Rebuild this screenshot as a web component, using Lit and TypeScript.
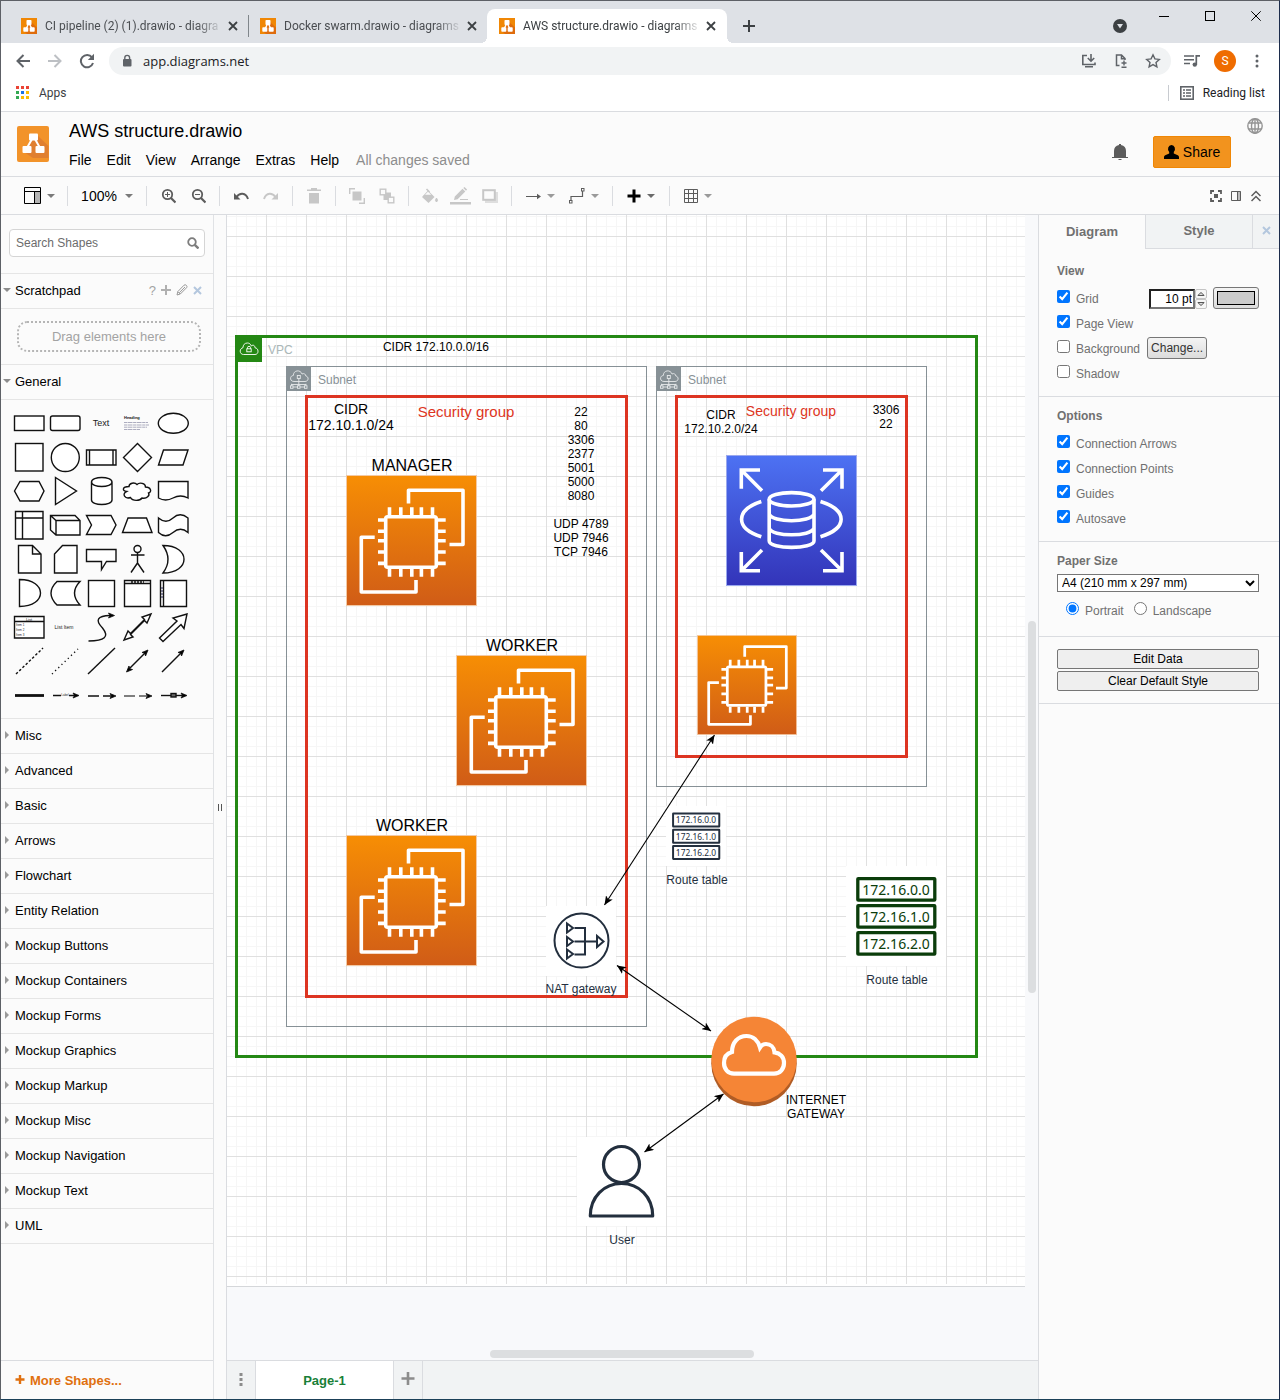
import { LitElement, html, svg, css, type SVGTemplateResult, type TemplateResult } from "lit";
import { customElement } from "lit/decorators.js";

/* ---------- helpers ---------- */

const icon = (w: number, h: number, body: SVGTemplateResult): TemplateResult =>
  html`<svg class="icon" width=${w} height=${h} viewBox="0 0 ${w} ${h}" aria-hidden="true">${body}</svg>`;

const base = css`
  * {
    box-sizing: border-box;
  }
  button,
  input,
  select {
    font-family: inherit;
    margin: 0;
  }
  .plain {
    border: 0;
    background: none;
    padding: 0;
    color: inherit;
    display: flex;
    align-items: center;
    justify-content: center;
  }
  .icon {
    display: block;
    flex: none;
  }
`;

const favicon = icon(16, 16, svg`
  <rect width="16" height="16" fill="#f08705"/>
  <path d="M9.500 3.500L16 9.500V16H6L3 13z" fill="#df6c0c"/>
  <path d="M7.500 6L5 11M8.500 6L11 11" stroke="#fff" stroke-width="1.400"/>
  <rect x="5.500" y="2" width="5" height="5" rx=".8" fill="#fff"/>
  <rect x="2.300" y="9.200" width="5" height="4.600" rx=".8" fill="#fff"/>
  <rect x="8.700" y="9.200" width="5" height="4.600" rx=".8" fill="#fff"/>`);

const caret = (fill = "#9a9a9a") => icon(8, 4, svg`<path d="M0 0h8L4 4z" fill=${fill}/>`);

const blueCross = icon(9, 9, svg`<path d="M1 1l7 7M8 1L1 8" stroke="#b4c7de" stroke-width="2"/>`);

/* ---------- browser frame ---------- */

@customElement("browser-bar")
class BrowserBar extends LitElement {
  static styles = [
    base,
    css`
      :host {
        display: block;
        font-family: Roboto, "Noto Sans", sans-serif;
        font-size: 12px;
        color: #3c4043;
        background: #fff;
      }
      .strip {
        display: flex;
        height: 42px;
        padding: 8px 0 0 8px;
        background: #dee1e6;
      }
      .tab {
        display: flex;
        align-items: center;
        flex: 0 1 239px;
        min-width: 0;
        height: 34px;
        padding: 0 7px 0 12px;
        color: #4a4d51;
      }
      .tab.split {
        border-left: 1px solid #80868b;
        border-image: linear-gradient(transparent 20%, #80868b 20%, #80868b 80%, transparent 80%) 1;
        padding-left: 11px;
      }
      .tab.active {
        flex-basis: 240px;
        position: relative;
        padding-right: 8px;
        background: #fff;
        border-radius: 8px 8px 0 0;
        color: #3c4043;
      }
      .tab.active::before,
      .tab.active::after {
        content: "";
        position: absolute;
        bottom: 0;
        width: 6px;
        height: 6px;
      }
      .tab.active::before {
        left: -6px;
        background: radial-gradient(circle at 0 0, transparent 6px, #fff 6px);
      }
      .tab.active::after {
        right: -6px;
        background: radial-gradient(circle at 100% 0, transparent 6px, #fff 6px);
      }
      .name {
        flex: 1;
        min-width: 0;
        margin: 0 2px 0 8px;
        overflow: hidden;
        white-space: nowrap;
        mask-image: linear-gradient(to right, #000 85%, transparent);
      }
      .close {
        width: 16px;
        height: 16px;
      }
      .new {
        width: 32px;
        margin-left: 6px;
      }
      .end {
        display: flex;
        margin-left: auto;
      }
      .search-tabs {
        width: 42px;
        height: 34px;
      }
      .win {
        width: 46px;
        height: 29px;
        margin-top: -8px;
      }
      .nav {
        display: flex;
        align-items: center;
        height: 37px;
        padding: 0 6px 1px;
        color: #5f6368;
      }
      .tool {
        width: 32px;
        height: 28px;
      }
      .address {
        display: flex;
        align-items: center;
        flex: 1;
        height: 28px;
        margin: 0 5px 0 6px;
        padding: 0 2px 0 12px;
        border-radius: 14px;
        background: #f1f3f4;
      }
      .url {
        flex: 1;
        min-width: 0;
        height: 28px;
        padding: 0 0 0 10px;
        border: 0;
        background: none;
        font-family: "Open Sans", "Noto Sans", sans-serif;
        font-size: 13px;
        color: #202124;
      }
      .avatar {
        width: 22px;
        height: 22px;
        margin: 0 5px 0 6px;
        border-radius: 50%;
        background: #ef6c00;
        color: #fff;
        font: 12px Roboto, sans-serif;
      }
      .marks {
        display: flex;
        align-items: center;
        height: 32px;
        padding: 0 14px 6px 15px;
        border-bottom: 1px solid #dadce0;
      }
      .mark {
        gap: 10px;
        height: 24px;
        font-size: 12px;
      }
      .reading {
        gap: 9px;
        margin-left: auto;
        padding-left: 11px;
        color: #202124;
        border-left: 1px solid #c8cbd0;
        height: 16px;
        font-size: 12px;
      }
    `,
  ];

  private tab(name: string, cls: string) {
    return html`<div class="tab ${cls}">
      ${favicon}<span class="name">${name}</span>
      <button class="plain close" aria-label="Close tab">
        ${icon(10, 10, svg`<path d="M1 1l8 8M9 1L1 9" stroke="#3c4043" stroke-width="1.800"/>`)}
      </button>
    </div>`;
  }

  render() {
    const dots = ["#ea4335", "#ea4335", "#ea4335", "#34a853", "#1a73e8", "#fbbc04", "#34a853", "#fbbc04", "#fbbc04"];
    return html`
      <div class="strip">
        ${this.tab("CI pipeline (2) (1).drawio - diagra", "")}
        ${this.tab("Docker swarm.drawio - diagrams", "split")}
        ${this.tab("AWS structure.drawio - diagrams", "active")}
        <button class="plain new" aria-label="New tab">
          ${icon(12, 12, svg`<path d="M6 0v12M0 6h12" stroke="#3c4043" stroke-width="2"/>`)}
        </button>
        <div class="end">
          <button class="plain search-tabs" aria-label="Search tabs">
            ${icon(14, 14, svg`<circle cx="7" cy="7" r="7" fill="#3c4043"/><path d="M4 5h6L7 9.500z" fill="#dee1e6"/>`)}
          </button>
          <button class="plain win" aria-label="Minimise">
            ${icon(10, 10, svg`<path d="M0 5.500h10" stroke="#000"/>`)}
          </button>
          <button class="plain win" aria-label="Maximise">
            ${icon(10, 10, svg`<rect x=".5" y=".5" width="9" height="9" fill="none" stroke="#000"/>`)}
          </button>
          <button class="plain win" aria-label="Close window">
            ${icon(10, 10, svg`<path d="M.3.300l9.400 9.400M9.700.3L.3 9.700" stroke="#000"/>`)}
          </button>
        </div>
      </div>
      <div class="nav">
        <button class="plain tool" aria-label="Back">
          ${icon(14, 14, svg`<path d="M14 7H1.500M7.500 1l-6 6 6 6" fill="none" stroke="#5f6368" stroke-width="2"/>`)}
        </button>
        <button class="plain tool" aria-label="Forward">
          ${icon(14, 14, svg`<path d="M0 7h12.500M6.500 1l6 6-6 6" fill="none" stroke="#bdc0c4" stroke-width="2"/>`)}
        </button>
        <button class="plain tool" aria-label="Reload">
          ${icon(16, 16, svg`<path d="M13 4.300A6.200 6.200 0 1 0 14 10" fill="none" stroke="#5f6368" stroke-width="2"/><path d="M15 .8V7H8.800z" fill="#5f6368"/>`)}
        </button>
        <div class="address">
          ${icon(12, 14, svg`<rect x="2" y="5" width="8.500" height="7.500" rx="1" fill="#5f6368"/><path d="M3.800 6V3.800a2.400 2.400 0 0 1 4.800 0V6" fill="none" stroke="#5f6368" stroke-width="1.400"/>`)}
          <input class="url" aria-label="Address" value="app.diagrams.net" />
          <button class="plain tool" aria-label="Install app">
            ${icon(16, 14, svg`<path d="M6 1.500H1.800v9H14V8.500" fill="none" stroke="#5f6368" stroke-width="1.600"/><path d="M4 12h8v1.500H4z" fill="#5f6368"/><path d="M10 0v6.500M6.800 4L10 7.200 13.200 4" fill="none" stroke="#5f6368" stroke-width="1.600"/>`)}
          </button>
          <button class="plain tool" aria-label="Save page">
            ${icon(14, 14, svg`<path d="M5.500 11.500H2.500V1h5l3.500 3.500V6M7.500 1v3.800H11" fill="none" stroke="#5f6368" stroke-width="1.500"/><path d="M10 6.500v5M7.500 9h5M7.500 13.300h5" fill="none" stroke="#5f6368" stroke-width="1.400"/>`)}
          </button>
          <button class="plain tool" aria-label="Bookmark">
            ${icon(16, 16, svg`<path d="M8 1.800l1.900 4.100 4.400.5-3.300 3 .9 4.400L8 11.600l-3.900 2.200.9-4.400-3.300-3 4.400-.5z" fill="none" stroke="#5f6368" stroke-width="1.400"/>`)}
          </button>
        </div>
        <button class="plain tool" aria-label="Media">
          ${icon(16, 12, svg`<path d="M0 1h10M0 4.800h10M0 8.500h6" stroke="#5f6368" stroke-width="1.600"/><path d="M12.300 10V.8H16" fill="none" stroke="#5f6368" stroke-width="1.700"/><circle cx="10.800" cy="9.600" r="2.200" fill="#5f6368"/>`)}
        </button>
        <button class="plain avatar" aria-label="Profile">S</button>
        <button class="plain tool" aria-label="Browser menu">
          ${icon(4, 14, svg`<circle cx="2" cy="2" r="1.500" fill="#5f6368"/><circle cx="2" cy="7" r="1.500" fill="#5f6368"/><circle cx="2" cy="12" r="1.500" fill="#5f6368"/>`)}
        </button>
      </div>
      <div class="marks">
        <button class="plain mark">
          ${icon(13, 13, svg`${dots.map((c, i) => svg`<rect x=${(i % 3) * 5} y=${Math.floor(i / 3) * 5} width="3" height="3" fill=${c}/>`)}`)}
          Apps
        </button>
        <button class="plain reading">
          ${icon(14, 14, svg`<rect x=".8" y=".8" width="12.400" height="12.400" fill="none" stroke="#5f6368" stroke-width="1.600"/><path d="M3 4h2M6 4h5M3 7h2M6 7h5M3 10h2M6 10h5" stroke="#5f6368" stroke-width="1.500"/>`)}
          Reading list
        </button>
      </div>
    `;
  }
}

/* ---------- application header and tool bar ---------- */

@customElement("editor-header")
class EditorHeader extends LitElement {
  static styles = [
    base,
    css`
      :host {
        display: block;
        background: #fbfbfb;
        font-size: 14px;
        color: #000;
      }
      .top {
        display: flex;
        height: 65px;
        padding: 0 16px;
        border-bottom: 1px solid #dadce0;
      }
      .logo {
        margin-top: 14px;
      }
      .titles {
        flex: 1;
        padding: 8px 0 0 20px;
      }
      .title {
        margin: 0;
        font-size: 18px;
        line-height: 22px;
        font-weight: normal;
      }
      .menus {
        display: flex;
        gap: 15px;
        margin-top: 8px;
        line-height: 20px;
      }
      .menus .plain {
        font-size: 14px;
      }
      .status {
        color: #8d8d8d;
        padding-left: 2px;
      }
      .bell {
        width: 32px;
        height: 32px;
        margin: 24px 17px 0 0;
      }
      .share {
        gap: 4px;
        width: 78px;
        height: 32px;
        margin: 24px 16px 0 0;
        background: #f2931e;
        border: 1px solid #f08705;
        border-radius: 2px;
        font-size: 14px;
      }
      .globe {
        width: 16px;
        height: 16px;
        margin-top: 6px;
      }
      .tools {
        display: flex;
        align-items: center;
        height: 38px;
        padding: 0 13px 0 16px;
        border-bottom: 1px solid #dadce0;
      }
      .tool {
        width: 30px;
        height: 30px;
        font-size: 14px;
      }
      .drop {
        width: 44px;
        gap: 6px;
      }
      .zoom {
        width: 66px;
        gap: 8px;
      }
      .sep {
        width: 1px;
        height: 20px;
        margin: 0 6px;
        background: #dadce0;
      }
      .view {
        width: 20px;
      }
      .first {
        margin-left: auto;
      }
    `,
  ];

  render() {
    const g = "#c7c7c7";
    const d = "#5c5c5c";
    const sep = html`<span class="sep"></span>`;
    const t = (label: string, body: TemplateResult) =>
      html`<button class="plain tool" aria-label=${label}>${body}</button>`;
    const drop = (label: string, body: TemplateResult, c?: string) =>
      html`<button class="plain tool drop" aria-label=${label}>${body}${caret(c)}</button>`;
    return html`
      <div class="top">
        <div class="logo">
          ${icon(32, 36, svg`
            <rect width="32" height="36" rx="2" fill="#f2932a"/>
            <path d="M19 8l12.500 12V32H16L7 26z" fill="#e07f30"/>
            <path d="M15 13l-4.500 8M18 13l4.500 8" stroke="#fff" stroke-width="2"/>
            <rect x="12" y="7.500" width="9" height="7" rx="1" fill="#fff"/>
            <rect x="5.500" y="20" width="9" height="7" rx="1" fill="#fff"/>
            <rect x="18.500" y="20" width="9" height="7" rx="1" fill="#fff"/>`)}
        </div>
        <div class="titles">
          <h1 class="title">AWS structure.drawio</h1>
          <nav class="menus">
            ${["File", "Edit", "View", "Arrange", "Extras", "Help"].map((m) => html`<button class="plain">${m}</button>`)}
            <span class="status">All changes saved</span>
          </nav>
        </div>
        <button class="plain bell" aria-label="Notifications">
          ${icon(16, 18, svg`<path d="M2 14V8a6 6 0 0 1 5-5.900V1h2v1.100A6 6 0 0 1 14 8v6z" fill="${d}"/><path d="M0 14.500h16M6.500 16.500h3" stroke="${d}"/>`)}
        </button>
        <button class="plain share">
          ${icon(15, 15, svg`<path d="M7.500 0a3.500 4 0 0 1 2.300 7v1.500l4 1.800q1.200.6 1.200 1.700v2H0v-2q0-1.100 1.200-1.700l4-1.800V7A3.500 4 0 0 1 7.500 0z"/>`)}
          Share
        </button>
        <button class="plain globe" aria-label="Language">
          ${icon(16, 16, svg`<g fill="none" stroke="#949494" stroke-width="1.400"><circle cx="8" cy="8" r="7.200"/><ellipse cx="8" cy="8" rx="3.500" ry="7.200"/><path d="M8 1v14M2 5h12M2 11h12"/></g>`)}
        </button>
      </div>
      <div class="tools">
        ${drop("View", icon(17, 17, svg`<rect x="11" y="5" width="5" height="11" fill="#b3b3b3"/><path d="M.500.500h16v16H.5zM.5 4.500h16M10.500 4.500V16.500" fill="none" stroke="#000"/>`), "#7a7a7a")}
        ${sep}
        <button class="plain tool zoom">100%${caret("#7a7a7a")}</button>
        ${sep}
        ${t("Zoom in", icon(16, 16, svg`<circle cx="7.500" cy="6.500" r="4.700" fill="none" stroke="${d}" stroke-width="1.800"/><path d="M11 10l4.500 4.500" stroke="${d}" stroke-width="2.200"/><path d="M5 6.500h5M7.500 4v5" stroke="${d}"/>`))}
        ${t("Zoom out", icon(16, 16, svg`<circle cx="7.500" cy="6.500" r="4.700" fill="none" stroke="${d}" stroke-width="1.800"/><path d="M11 10l4.500 4.500" stroke="${d}" stroke-width="2.200"/><path d="M5 6.500h5" stroke="${d}"/>`))}
        ${sep}
        ${t("Undo", icon(16, 10, svg`<path d="M1 2v6.500h6.500z" fill="${d}"/><path d="M3.500 6Q6 2.500 9.500 2.800 13.500 3.200 15 8" fill="none" stroke="${d}" stroke-width="1.900"/>`))}
        ${t("Redo", icon(16, 10, svg`<path d="M15 2v6.500H8.500z" fill="${g}"/><path d="M12.500 6Q10 2.500 6.500 2.800 2.500 3.200 1 8" fill="none" stroke="${g}" stroke-width="1.900"/>`))}
        ${sep}
        ${t("Delete", icon(14, 16, svg`<path d="M0 1.500h4V0h6v1.500h4V3H0zM2 5h10v10.500H2z" fill="${g}"/>`))}
        ${sep}
        ${t("To front", icon(16, 16, svg`<rect x="3.500" y="3.500" width="9" height="9" fill="${g}"/><path d="M.7 6V.700H6M15.300 10v5.300H10" fill="none" stroke="${g}" stroke-width="1.400"/>`))}
        ${t("To back", icon(16, 16, svg`<path d="M4.500 4.500h7.500v7.500H4.500z" fill="${g}"/><rect x="1.200" y="1.200" width="5.600" height="5.600" fill="#fbfbfb" stroke="${g}" stroke-width="1.400"/><rect x="9.200" y="9.200" width="5.600" height="5.600" fill="#fbfbfb" stroke="${g}" stroke-width="1.400"/>`))}
        ${sep}
        ${t("Fill colour", icon(18, 16, svg`<path d="M7 2.500L13.500 9 7.500 15 1 9z" fill="${g}"/><path d="M5.500 1l3 3M2.500 8h9.500" stroke="${g}" stroke-width="1.600"/><path d="M4 6.800L7 3.700l3.200 3.100z" fill="#fbfbfb"/><path d="M15.500 10q2 2.600 0 4-2-1.400 0-4z" fill="${g}" stroke="${g}"/>`))}
        ${t("Line colour", icon(21, 18, svg`<path d="M0 15h21v2.500H0z" fill="${g}"/><path d="M4 13l.8-3.600L12.500 1.700l2.800 2.800-7.700 7.700zM13.300 1l1.200-1 2.600 2.600L16 3.700z" fill="${g}"/><path d="M10 12.500h8" stroke="${g}"/>`))}
        ${t("Shadow", icon(16, 14, svg`<path d="M3 3h13v11H3z" fill="#dedede"/><rect x="1.200" y="1.200" width="11.600" height="9.600" fill="#fbfbfb" stroke="${g}" stroke-width="2"/>`))}
        ${sep}
        ${drop("Connection", icon(15, 8, svg`<path d="M0 4.500h12" stroke="${d}"/><path d="M15 4.500l-4-2.800v5.600z" fill="${d}"/>`))}
        ${drop("Waypoints", icon(16, 16, svg`<path d="M2 13V8.500h11.500V3" fill="none" stroke="${d}" stroke-width="1.200"/><rect x=".5" y="12.500" width="2.500" height="2.500" fill="#fff" stroke="${d}"/><rect x="12.500" y=".5" width="2.500" height="2.500" fill="#fff" stroke="${d}"/>`))}
        ${sep}
        ${drop("Insert", icon(14, 14, svg`<path d="M7 .5v13M.5 7h13" stroke="#000" stroke-width="3"/>`), "#6a6a6a")}
        ${sep}
        ${drop("Table", icon(14, 14, svg`<path d="M.5.500h13v13H.5zM4.500.5v13M9.500.5v13M.5 4.500h13M.5 9.500h13" fill="none" stroke="${d}"/>`))}
        <button class="plain tool view first" aria-label="Fullscreen">
          ${icon(12, 12, svg`<path d="M4 1H1v3M8 1h3v3M4 11H1V8M8 11h3V8" fill="none" stroke="${d}" stroke-width="1.800"/><rect x="4" y="4" width="4" height="4" fill="${d}"/>`)}
        </button>
        <button class="plain tool view" aria-label="Format panel">
          ${icon(10, 10, svg`<path d="M6.500 0H10v10H6.500z" fill="#bbb"/><path d="M.5.500h9v9h-9zM6.500.5v9" fill="none" stroke="${d}"/>`)}
        </button>
        <button class="plain tool view" aria-label="Collapse">
          ${icon(10, 12, svg`<path d="M.5 6L5 1.500 9.500 6M.5 11L5 6.500 9.500 11" fill="none" stroke="${d}" stroke-width="1.500"/>`)}
        </button>
      </div>
    `;
  }
}

/* ---------- shape palette ---------- */

const tiny = (x: number, y: number, size: number, text: string) =>
  svg`<text x=${x} y=${y} font-size=${size} text-anchor="middle" fill="#222" stroke="none">${text}</text>`;

const head = (x: number, y: number, angle: number) =>
  svg`<path d="M0 0L-6 -2.500L-4.500 0L-6 2.500Z" transform="translate(${x} ${y}) rotate(${angle})" fill="#000" stroke-width=".8"/>`;

const shapes: [string, SVGTemplateResult][] = [
  ["Rectangle", svg`<rect x="3.500" y="10" width="29.500" height="14.500"/>`],
  ["Rounded rectangle", svg`<rect x="3.500" y="10" width="29.500" height="14.500" rx="2"/>`],
  ["Text", tiny(18, 20, 9, "Text")],
  ["Textbox", svg`<text x="5" y="13" font-size="4" font-weight="bold" fill="#111" stroke="none">Heading</text><path d="M5 16.500h24M5 19h25M5 21.200h23M5 23.500h16" stroke="#8a8aa5" stroke-width=".7" stroke-dasharray="3 .5 5 .6"/>`],
  ["Ellipse", svg`<ellipse cx="18.300" cy="17.300" rx="15" ry="10"/>`],
  ["Square", svg`<rect x="4.500" y="3.500" width="27.500" height="27.500"/>`],
  ["Circle", svg`<circle cx="18.300" cy="17.500" r="14"/>`],
  ["Process", svg`<path d="M3.500 10H33v15H3.500zM6.500 10v15M30 10v15"/>`],
  ["Diamond", svg`<path d="M18.500 3.500l14 14-14 14-14-14z"/>`],
  ["Parallelogram", svg`<path d="M8.500 10H33l-5 15H3.500z"/>`],
  ["Hexagon", svg`<path d="M3.500 17L9 7.500h19l5 9.500-5 10H9z"/>`],
  ["Triangle", svg`<path d="M8.500 3.500l21 13.500-21 13.500z"/>`],
  ["Cylinder", svg`<path d="M8.500 8v18c0 6 20.500 6 20.500 0V8c0-6-20.500-6-20.500 0 0 6 20.500 6 20.500 0"/>`],
  ["Cloud", svg`<path d="M10 12.500C3 12.500 3 17 7.500 17.500 2.500 20 6 25.500 11.500 23.500c2 4 9.500 3.500 11.500.5 5 1 8-2.500 6.500-5 4-1.500 2-6-3-6 0-4-6-5-8.500-2.500C15.500 8 10 9 10 12.500z"/>`],
  ["Document", svg`<path d="M3.500 7.500H33v16.500q-7.500-4-15 0t-14.500 0z"/>`],
  ["Internal storage", svg`<path d="M4.500 3.500H32V31H4.500zM11.500 3.500V31M4.500 10H32"/>`],
  ["Cube", svg`<path d="M3.500 7.500H28l5 5v14.500H9l-5.500-5zM3.500 7.500l5.500 5h24M9 12.500V27"/>`],
  ["Step", svg`<path d="M3.500 7.500H28l5 9.500-5 9.500H3.500l5-9.500z"/>`],
  ["Trapezoid", svg`<path d="M3.500 24.500l5.500-14.500h18.500l5.500 14.500z"/>`],
  ["Tape", svg`<path d="M3.500 10q7.500 6.500 14.500 0t15 0V24.500q-7.500-6.500-15 0t-14.500 0z"/>`],
  ["Note", svg`<path d="M7.500 3.500h14l8.500 8.500v19H7.500zM21.500 3.500V12H30"/>`],
  ["Card", svg`<path d="M15.500 3.500H30V31H7.500V12z"/>`],
  ["Callout", svg`<path d="M3.500 7.500H33v12H23.500l-5 8v-8h-15z"/>`],
  ["Actor", svg`<circle cx="18.500" cy="7" r="3.500"/><path d="M18.500 10.500v12M12 13h13.500M18.500 21l-6.500 9.500M18.500 21l6.500 9.500"/>`],
  ["Or", svg`<path d="M8 3.500c28 0 28 27.500 0 27.500q10-13.500 0-27.500z"/>`],
  ["And", svg`<path d="M8.500 3.500c28 0 28 27 0 27z"/>`],
  ["Data storage", svg`<path d="M10 5.500H33q-11 11.500 0 23.500H10q-12-12 0-23.500z"/>`],
  ["Container", svg`<rect x="5.500" y="4.500" width="26" height="26"/>`],
  ["Titled container", svg`<path d="M5.500 4.500h26v26h-26zM5.500 7.500h26"/><path d="M12 6h13" stroke-dasharray="2 1"/>`],
  ["Side container", svg`<path d="M5.500 4.500h26v26h-26zM8.500 4.500v26"/><path d="M7 11v12" stroke="#557" stroke-dasharray="2 1"/>`],
  ["List", svg`<path d="M3.500 6.500H33v21.500H3.500zM3.500 11.500H33"/>${tiny(18, 10.5, 4, "List")}<text font-size="3" fill="#222" stroke="none"><tspan x="5" y="15.500">Item 1</tspan><tspan x="5" y="20.500">Item 2</tspan><tspan x="5" y="26">Item 3</tspan></text>`],
  ["List item", tiny(17, 19, 5, "List Item")],
  ["Curve", svg`<path fill="none" d="M5.500 31Q30 31 19.500 18 8 6 27 5.500"/>${head(31.5, 5.5, 0)}`],
  ["Bidirectional arrow", svg`<path d="M32 4l-9 3 2.500 2.500-14 14-2.500-2.500L5 30l9-3-2.500-2.500 14-14 2.500 2.500z"/>`],
  ["Arrow", svg`<path d="M32 4l-14 4 4 3L4.500 28 8 31.500 26 14.500l3 4z"/>`],
  ["Dashed line", svg`<path d="M5 30L32 4" stroke-dasharray="2.500 2"/>`],
  ["Dotted line", svg`<path d="M5 30L31 5" stroke-dasharray="1.200 3.200"/>`],
  ["Line", svg`<path d="M5 30L32 4"/>`],
  ["Bidirectional connector", svg`<path d="M9 26L27 8"/>${head(29, 6, -45)}${head(7.5, 28, 135)}`],
  ["Directional connector", svg`<path d="M7 28L27 8"/>${head(29, 6, -45)}`],
  ["Link", svg`<path d="M4 17.500h29" stroke-width="2.800"/>`],
  ["Connector 1", svg`<path d="M6 17.500h8M22 17.500h6"/>${tiny(18, 18, 3, "Label")}${head(32, 17.5, 0)}`],
  ["Connector 2", svg`<path d="M5 18h11M20 18h9"/>${head(33, 18, 0)}`],
  ["Connector 3", svg`<path d="M5 18h11M20 18h8" stroke="#555"/>${head(33, 18, 0)}`],
  ["Connector 4", svg`<path d="M6 17.500h24"/><rect x="16" y="15.500" width="5" height="3.500" fill="#666"/>${head(32, 17.5, 0)}`],
];

@customElement("shape-sidebar")
class ShapeSidebar extends LitElement {
  static styles = [
    base,
    css`
      :host {
        display: flex;
        flex-direction: column;
        width: 213px;
        border-right: 1px solid #e0e2e5;
        font-size: 13px;
        color: #000;
      }
      .search {
        padding: 14px 8px 16px;
        border-bottom: 1px solid #e5e5e5;
      }
      .field {
        display: flex;
        align-items: center;
        height: 28px;
        padding: 0 5px 0 6px;
        background: #fff;
        border: 1px solid #d5d5d5;
        border-radius: 4px;
      }
      .query {
        flex: 1;
        min-width: 0;
        border: 0;
        padding: 0;
        background: none;
        font-size: 12px;
      }
      .query::placeholder {
        color: #6c6c6c;
      }
      .group {
        display: flex;
        align-items: center;
        height: 35px;
        padding-bottom: 2px;
        border-bottom: 1px solid #e5e5e5;
      }
      .label {
        justify-content: flex-start;
        gap: 4px;
        flex: 1;
        height: 32px;
        padding: 0 0 0 2px;
        font-size: 13px;
      }
      .mark {
        display: flex;
        justify-content: center;
        width: 8px;
      }
      .acts {
        display: flex;
        gap: 5px;
        padding-right: 11px;
        color: #a3a3a3;
      }
      .acts .plain {
        font-size: 13px;
      }
      .pad {
        padding: 12px;
        padding-left: 16px;
        border-bottom: 1px solid #e5e5e5;
      }
      .drop {
        display: flex;
        align-items: center;
        justify-content: center;
        height: 31px;
        border: 2px dotted #b5b5b5;
        border-radius: 10px;
        color: #a3a3a3;
      }
      .shapes {
        display: grid;
        grid-template-columns: repeat(5, 36px);
        grid-auto-rows: 34px;
        padding: 6px 10px;
        border-bottom: 1px solid #e5e5e5;
      }
      .glyph {
        fill: #fff;
        stroke: #111;
        stroke-width: 1.4px;
        font-family: "Liberation Sans", sans-serif;
      }
      .more {
        justify-content: flex-start;
        gap: 5px;
        height: 39px;
        margin-top: auto;
        padding: 0 0 0 14px;
        border-top: 1px solid #dadce0;
        color: #e0700f;
        font-size: 13px;
        font-weight: bold;
      }
    `,
  ];

  private group(name: string, open = false, acts?: TemplateResult) {
    return html`<div class="group">
      <button class="plain label" aria-expanded=${open ? "true" : "false"}>
        <span class="mark">
          ${open
            ? icon(8, 4, svg`<path d="M0 0h8L4 4z" fill="#8c8c8c"/>`)
            : icon(4, 8, svg`<path d="M0 0l4 4-4 4z" fill="#9a9a9a"/>`)}
        </span>
        ${name}
      </button>
      ${acts ?? ""}
    </div>`;
  }

  render() {
    const closed = [
      "Misc", "Advanced", "Basic", "Arrows", "Flowchart", "Entity Relation", "Mockup Buttons", "Mockup Containers",
      "Mockup Forms", "Mockup Graphics", "Mockup Markup", "Mockup Misc", "Mockup Navigation", "Mockup Text", "UML",
    ];
    return html`
      <div class="search">
        <div class="field">
          <input class="query" type="text" placeholder="Search Shapes" aria-label="Search Shapes" />
          ${icon(12, 12, svg`<circle cx="5" cy="5" r="3.800" fill="none" stroke="#7d7d7d" stroke-width="1.800"/><path d="M7.800 7.800l3.700 3.700" stroke="#7d7d7d" stroke-width="2.400"/>`)}
        </div>
      </div>
      ${this.group("Scratchpad", true, html`<div class="acts">
        <button class="plain" aria-label="Help">?</button>
        <button class="plain" aria-label="Add">${icon(10, 10, svg`<path d="M5 0v10M0 5h10" stroke="#b0b0b0" stroke-width="2"/>`)}</button>
        <button class="plain" aria-label="Edit">${icon(12, 12, svg`<path d="M1 11l.8-3.400L8 1.200q1.300-1 2.400.2 1.100 1.100.2 2.300L4.300 10zM2 7.800l2.200 2.200M3.300 8.800L9 3" fill="none" stroke="#8e8e8e" stroke-width=".9"/>`)}</button>
        <button class="plain" aria-label="Close">${blueCross}</button>
      </div>`)}
      <div class="pad"><div class="drop">Drag elements here</div></div>
      ${this.group("General", true)}
      <div class="shapes">
        ${shapes.map(([name, body]) => html`<button class="plain" aria-label=${name}>
          <svg class="glyph" width="36" height="34" viewBox="0 0 36 34">${body}</svg>
        </button>`)}
      </div>
      ${closed.map((name) => this.group(name))}
      <button class="plain more">
        ${icon(10, 10, svg`<path d="M5 0v9M.5 4.500h9" stroke="#e0700f" stroke-width="2.400"/>`)}More Shapes...
      </button>
    `;
  }
}

/* ---------- diagram ---------- */

const INK = "#232f3e";

const label = (x: number, y: number, text: string, cls = "") =>
  svg`<text class="mid ${cls}" x=${x} y=${y}>${text}</text>`;

const ec2 = (x: number, y: number, size: number) => svg`
  <svg x=${x} y=${y} width=${size} height=${size} viewBox="0 0 131 131">
    <rect x=".5" y=".5" width="130" height="130" fill="url(#compute)" stroke="#f3c9a4"/>
    <g fill="none" stroke="#fff" stroke-width="3.600" stroke-linejoin="round">
      <rect x="39.700" y="41.700" width="50.600" height="50.600" rx="2"/>
      <path d="M62.500 28.500V15.200H117V69.500H103.500M28.700 62.300H15.300V117H70V105"/>
      <path d="${[43.5, 54.8, 65.8, 75.4, 86.5].map((p) => `M${p} 32.300V41M${p} 94V101.700`).join("")}"/>
      <path d="${[45, 56.3, 65.8, 77, 88.4].map((p) => `M32 ${p}H39M91 ${p}H99.700`).join("")}"/>
    </g>
  </svg>`;

const rds = svg`
  <svg x="726" y="455" width="131" height="131" viewBox="0 0 131 131">
    <rect x=".5" y=".5" width="130" height="130" fill="url(#database)" stroke="#9aa8ee"/>
    <g fill="none" stroke="#fff" stroke-width="3.600">
      <path d="M15.300 33.700V15H34M15.300 15L36 35.700M97 15H116V33.700M116 15L95 35.700"/>
      <path d="M15.300 97V115.700H34M15.300 115.700L36 95M97 115.700H116V97M116 115.700L95 95"/>
      <path d="M35.300 46.500C9 55 9 73.500 35.300 81.700M94.500 46.500C122 55 122 73.500 94.500 81.700"/>
      <ellipse cx="65.600" cy="44.300" rx="22.400" ry="6.700"/>
      <path d="M43.200 44.300V86C43.200 94.500 88 94.500 88 86V44.300M43.200 59C46 68 85 68 88 59M43.200 73.200C46 82 85 82 88 73.200"/>
    </g>
  </svg>`;

const routeTable = (x: number, y: number, size: number, color: string) => svg`
  <svg x=${x} y=${y} width=${size} height=${size} viewBox="0 0 100 100">
    <rect width="100" height="100" fill="#fff"/>
    ${["172.16.0.0", "172.16.1.0", "172.16.2.0"].map((ip, i) => svg`
      <rect x="11.800" y=${12.6 + i * 27} width="77" height="21.600" rx=".5" fill="#fff" stroke=${color} stroke-width="3.300"/>
      <text class="ip" x="50" y=${29 + i * 27} fill=${color}>${ip}</text>`)}
  </svg>`;

const subnetIcon = (x: number) => svg`
  <g transform="translate(${x} 366)">
    <rect width="25" height="25" fill="#879196"/>
    <g fill="none" stroke="#e6e9ea" stroke-width=".9">
      <path d="M8 15.500C3.500 15.500 3.500 9.800 7.300 9.500 7.300 4 14.500 3.300 16 8c2.300-1.200 3.700.4 3.800 2 3.400.6 3 5.500-.8 5.500H8"/>
      <rect x="11.300" y="9.500" width="3" height="3"/>
      <path d="M12.800 12.500v7.500M5.500 17.800v2M7 21h5M14 21h4.500M20 17.800v2M5.500 18.500h14.500"/>
      <rect x="4.500" y="19.800" width="2.500" height="2.500"/><rect x="11.500" y="19.800" width="2.500" height="2.500"/><rect x="18.500" y="19.800" width="2.500" height="2.500"/>
    </g>
  </g>`;

@customElement("diagram-canvas")
class DiagramCanvas extends LitElement {
  static styles = [
    base,
    css`
      :host {
        display: flex;
        flex-direction: column;
        min-width: 0;
        flex: 1;
        border-left: 1px solid #dadce0;
        background: #f8f9fb;
        font-size: 13px;
      }
      .area {
        flex: 1;
        display: grid;
        grid-template-columns: minmax(0, 1fr) 13px;
        grid-template-rows: 1072px minmax(63px, 1fr) 10px;
      }
      .page {
        display: block;
        width: 100%;
        height: 1072px;
        background: #fff;
        border-bottom: 1px solid #d5d7da;
        font-family: "Liberation Sans", sans-serif;
        font-size: 12px;
      }
      .vbar {
        padding: 406px 2px 0 3px;
      }
      .vthumb {
        height: 372px;
        border-radius: 4px;
        background: #dcdee0;
      }
      .hbar {
        grid-row: 3;
      }
      .hthumb {
        width: 33%;
        height: 8px;
        margin-left: 33%;
        border-radius: 4px;
        background: #dcdee0;
      }
      .pages {
        display: flex;
        height: 39px;
        border-top: 1px solid #dadce0;
        background: #f1f3f4;
      }
      .pages .plain {
        width: 29px;
        border-right: 1px solid #dadce0;
      }
      .pages .current {
        width: 138px;
        background: #fff;
        color: #188038;
        font-size: 13px;
        font-weight: bold;
      }
      .mid {
        text-anchor: middle;
      }
      .t14 {
        font-size: 14px;
      }
      .t15 {
        font-size: 15px;
      }
      .t16 {
        font-size: 16px;
      }
      .red {
        fill: #dd3522;
      }
      .ink {
        fill: #232f3e;
      }
      .gray {
        fill: #879196;
      }
      .pale {
        fill: #aab7b8;
      }
      .ip {
        text-anchor: middle;
        font-family: "Noto Sans", sans-serif;
        font-size: 14px;
      }
    `,
  ];

  render() {
    const ports = ["22", "80", "3306", "2377", "5001", "5000", "8080", "", "UDP 4789", "UDP 7946", "TCP 7946"];
    return html`
      <div class="area">
        <svg class="page" role="img" aria-label="AWS structure">
          <defs>
            <pattern id="grid" x="-1" y="21" width="40" height="40" patternUnits="userSpaceOnUse">
              <path d="M10.500 0v40M20.500 0v40M30.500 0v40M0 10.500h40M0 20.500h40M0 30.500h40" stroke="#f6f6f6"/>
              <path d="M.5 0v40M0 .5h40" stroke="#e0e0e0"/>
            </pattern>
            <linearGradient id="compute" x1="0" y1="0" x2="0" y2="1"><stop offset="0" stop-color="#f78e04"/><stop offset="1" stop-color="#d05c17"/></linearGradient>
            <linearGradient id="database" x1="0" y1="0" x2="0" y2="1"><stop offset="0" stop-color="#4d72f3"/><stop offset="1" stop-color="#3334b9"/></linearGradient>
            <marker id="arrow" viewBox="0 0 9 8" refX="9" refY="4" markerWidth="9" markerHeight="8" markerUnits="userSpaceOnUse" orient="auto-start-reverse">
              <path d="M9 4L0 0L2.300 4L0 8Z"/>
            </marker>
          </defs>
          <rect width="100%" height="1069" fill="url(#grid)"/>
          <g transform="translate(-227 -215)">
            <g fill="none">
              <rect x="236.500" y="336.500" width="740" height="720" stroke="#248814" stroke-width="3"/>
              <rect x="286.500" y="366.500" width="360" height="660" stroke="#879196"/>
              <rect x="656.500" y="366.500" width="270" height="420" stroke="#879196"/>
              <rect x="306.500" y="396.500" width="320" height="600" stroke="#dd3522" stroke-width="3"/>
              <rect x="676.500" y="396.500" width="230" height="360" stroke="#dd3522" stroke-width="3"/>
            </g>
            <rect x="236" y="336" width="26" height="26" fill="#248814"/>
            <g fill="none" stroke="#fff" stroke-width=".9">
              <path d="M243.500 354.500h11.500c2 0 3-1.500 3-3.300 0-2-1.300-3.200-3-3.400 0-1.600-.8-2.600-2-2.600-.6 0-1.200.3-1.600.8-.7-1.800-2-3-4-3-2.800 0-4.400 2-4.400 4.700-1.600.4-2.800 1.600-2.800 3.400 0 2 1.400 3.400 3.300 3.400z"/>
              <path d="M247.500 348.800v-1a1.500 1.500 0 0 1 3 0v1"/>
              <rect x="246.800" y="348.800" width="4.400" height="3"/>
            </g>
            <text class="pale" x="268" y="354">VPC</text>
            ${label(436, 351, "CIDR 172.10.0.0/16")}
            ${subnetIcon(286)}${subnetIcon(656)}
            <text class="gray" x="318" y="384">Subnet</text>
            <text class="gray" x="688" y="384">Subnet</text>

            ${label(351, 414, "CIDR", "t14")}${label(351, 430, "172.10.1.0/24", "t14")}
            ${label(466, 417, "Security group", "t15 red")}
            ${ports.map((p, i) => label(581, 416 + i * 14, p))}
            ${label(412, 471, "MANAGER", "t16")}${ec2(346, 475, 131)}
            ${label(522, 651, "WORKER", "t16")}${ec2(456, 655, 131)}
            ${label(412, 831, "WORKER", "t16")}${ec2(346, 835, 131)}

            ${label(721, 419, "CIDR")}${label(721, 433, "172.10.2.0/24")}
            ${label(791, 416, "Security group", "t14 red")}
            ${label(886, 414, "3306")}${label(886, 428, "22")}
            ${rds}${ec2(697, 635, 100)}

            ${routeTable(666, 806, 60, INK)}${label(697, 884, "Route table", "ink")}
            ${routeTable(846, 866, 100, "#0b3d0b")}${label(897, 984, "Route table", "ink")}

            <rect x="546" y="906" width="70" height="70" fill="#fff"/>
            <g fill="none" stroke=${INK} stroke-width="2">
              <circle cx="581.500" cy="940.500" r="27"/>
              <path d="M567 923.500v9l6-4.500zM567 937v9l6-4.500zM567 949.500v9l6-4.500zM597 936v11l6.500-5.500z"/>
              <path d="M574.500 928H585v26.500H574.500M574.500 941.500H597"/>
            </g>
            ${label(581, 993, "NAT gateway", "ink")}

            <rect x="577" y="1137" width="89" height="89" fill="#fff"/>
            <g fill="none" stroke=${INK} stroke-width="3.200" stroke-linejoin="round">
              <circle cx="621.500" cy="1164.500" r="18"/>
              <path d="M590.300 1216C590.300 1197 604 1183.500 621.500 1183.500S652.700 1197 652.700 1216Z"/>
            </g>
            ${label(622, 1244, "User", "ink")}

            <g stroke="#000" fill="none" stroke-width="1.100">
              <path d="M604.500 905L714.500 735" marker-start="url(#arrow)" marker-end="url(#arrow)"/>
              <path d="M617 965.500L711 1031" marker-start="url(#arrow)" marker-end="url(#arrow)"/>
              <path d="M644.500 1152L723.500 1094" marker-start="url(#arrow)" marker-end="url(#arrow)"/>
            </g>

            <circle cx="754" cy="1063.500" r="42.700" fill="#b05c25"/>
            <circle cx="754" cy="1059.500" r="42.700" fill="#f58536"/>
            <path d="M734 1073.700H774C780 1073.700 784 1069 784 1063C784 1057 780 1053 774.500 1052.300C774 1047 770.500 1044 766 1044C763.500 1044 761.500 1045.300 760 1047.500C758 1040.500 753 1036 746.500 1036C738 1036 732 1042.500 732 1052C727 1053.300 724 1057.500 724 1063C724 1069 728 1073.700 734 1073.700Z" fill="none" stroke="#fff" stroke-width="4.200"/>
            ${label(816, 1104, "INTERNET")}${label(816, 1118, "GATEWAY")}
          </g>
        </svg>
        <div class="vbar"><div class="vthumb"></div></div>
        <div class="hbar"><div class="hthumb"></div></div>
      </div>
      <div class="pages">
        <button class="plain" aria-label="Pages">
          ${icon(4, 14, svg`<path d="M.5 0h3v3h-3zM.5 5h3v3h-3zM.5 10h3v3h-3z" fill="#8c8c8c"/>`)}
        </button>
        <button class="plain current">Page-1</button>
        <button class="plain" aria-label="Insert page">
          ${icon(14, 16, svg`<path d="M7 0v13M.5 6.500h13" stroke="#8c8c8c" stroke-width="2.600"/>`)}
        </button>
      </div>
    `;
  }
}

/* ---------- format panel ---------- */

@customElement("format-panel")
class FormatPanel extends LitElement {
  static styles = [
    base,
    css`
      :host {
        display: block;
        width: 241px;
        border-left: 1px solid #dadce0;
        font-size: 12px;
        color: #707070;
      }
      .tabs {
        display: flex;
        height: 34px;
      }
      .tabs .plain {
        flex: 1;
        padding-bottom: 2px;
        font-size: 13px;
        font-weight: bold;
        background: #f1f3f4;
        border-left: 1px solid #dadce0;
        border-bottom: 1px solid #dadce0;
      }
      .tabs .on {
        background: none;
        border: 0;
      }
      .tabs .shut {
        flex: none;
        width: 27px;
      }
      .box {
        padding: 11px 20px 10px 18px;
        border-bottom: 1px solid #dadce0;
      }
      .top {
        padding-top: 14px;
      }
      .title {
        margin: 0 0 7px;
        font-size: 12px;
        line-height: 16px;
      }
      .row {
        display: flex;
        align-items: center;
        height: 25px;
      }
      .opt {
        display: flex;
        align-items: center;
        gap: 6px;
      }
      .opt input {
        width: 13px;
        height: 13px;
        margin-bottom: 4px;
      }
      .size {
        width: 46px;
        height: 20px;
        margin-left: auto;
        padding: 0 1px;
        border: 2px inset #767676;
        background: #fff;
        font-size: 12px;
        text-align: right;
        color: #000;
      }
      .spin {
        display: flex;
        flex-direction: column;
        width: 12px;
        margin-right: 6px;
      }
      .spin .plain {
        height: 10px;
        border: 1px solid #c4c4c4;
        border-radius: 2px;
        background: #f6f6f6;
      }
      .push {
        height: 22px;
        padding: 0 3px;
        margin-bottom: 2px;
        border: 1px solid #767676;
        border-radius: 3px;
        background: linear-gradient(#f4f4f4, #dcdcdc);
        font-size: 12px;
        line-height: 16px;
        color: #333;
      }
      .color {
        width: 46px;
      }
      .swatch {
        display: block;
        height: 14px;
        border: 1px solid #000;
        background: #ccc;
      }
      .change {
        width: 60px;
        margin-left: 7px;
      }
      .paper {
        padding-bottom: 13px;
      }
      .paper .title {
        margin-bottom: 5px;
      }
      .paper .row {
        gap: 10px;
        margin-top: 6px;
        padding-left: 9px;
      }
      .choose {
        display: block;
        width: 100%;
        height: 18px;
        padding: 0;
        border: 1px solid #767676;
        background: #fff;
        font-size: 12px;
        color: #000;
      }
      .acts {
        display: flex;
        flex-direction: column;
        gap: 2px;
        padding-top: 12px;
        padding-bottom: 12px;
      }
      .wide {
        height: 20px;
        padding: 0;
        border: 1px solid #767676;
        border-radius: 2px;
        background: #efefef;
        font-size: 12px;
        color: #000;
      }
    `,
  ];

  private check(name: string, on = true) {
    return html`<label class="opt"><input type="checkbox" .checked=${on} />${name}</label>`;
  }

  render() {
    return html`
      <div class="tabs">
        <button class="plain on">Diagram</button>
        <button class="plain">Style</button>
        <button class="plain shut" aria-label="Hide">${blueCross}</button>
      </div>
      <section class="box top">
        <h2 class="title">View</h2>
        <div class="row">
          ${this.check("Grid")}
          <input class="size" type="text" value="10 pt" aria-label="Grid size" />
          <span class="spin">
            <button class="plain" aria-label="Increase">${icon(8, 4, svg`<path d="M.8 3.500L4 .5l3.200 3z" fill="#ddd" stroke="#555"/>`)}</button>
            <button class="plain" aria-label="Decrease">${icon(8, 4, svg`<path d="M.8 .5L4 3.500 7.200 .5z" fill="#ddd" stroke="#555"/>`)}</button>
          </span>
          <button class="push color" aria-label="Grid colour"><span class="swatch"></span></button>
        </div>
        <div class="row">${this.check("Page View")}</div>
        <div class="row">${this.check("Background", false)}<button class="push change">Change...</button></div>
        <div class="row">${this.check("Shadow", false)}</div>
      </section>
      <section class="box">
        <h2 class="title">Options</h2>
        ${["Connection Arrows", "Connection Points", "Guides", "Autosave"].map((n) => html`<div class="row">${this.check(n)}</div>`)}
      </section>
      <section class="box paper">
        <h2 class="title">Paper Size</h2>
        <select class="choose" aria-label="Paper Size"><option>A4 (210 mm x 297 mm)</option></select>
        <div class="row">
          <label class="opt"><input type="radio" name="turn" checked />Portrait</label>
          <label class="opt"><input type="radio" name="turn" />Landscape</label>
        </div>
      </section>
      <section class="box acts">
        <button class="wide">Edit Data</button>
        <button class="wide">Clear Default Style</button>
      </section>
    `;
  }
}

/* ---------- page ---------- */

@customElement("app-root")
class AppRoot extends LitElement {
  static styles = [
    base,
    css`
      :host {
        display: flex;
        flex-direction: column;
        box-sizing: border-box;
        min-height: 100vh;
        border: 1px solid #5d6066;
        border-right-color: #1c2c4c;
        border-bottom-color: #1b4058;
        background: #fbfbfb;
        font-family: "Liberation Sans", Arial, sans-serif;
      }
      .body {
        display: flex;
        flex: 1;
      }
      .splitter {
        display: flex;
        align-items: center;
        justify-content: center;
        width: 12px;
      }
    `,
  ];

  render() {
    return html`
      <browser-bar></browser-bar>
      <editor-header></editor-header>
      <div class="body">
        <shape-sidebar></shape-sidebar>
        <div class="splitter">${icon(4, 7, svg`<path d="M.5 0v7M3.500 0v7" stroke="#555"/>`)}</div>
        <diagram-canvas></diagram-canvas>
        <format-panel></format-panel>
      </div>
    `;
  }
}
